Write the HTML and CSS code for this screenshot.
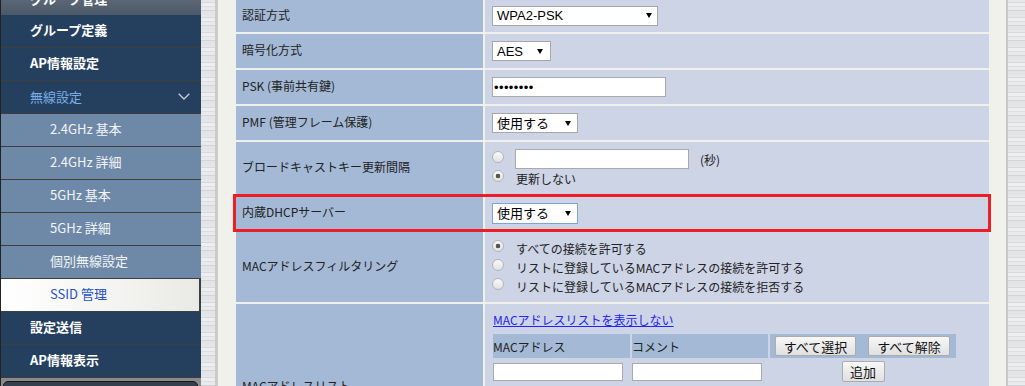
FILE: index.html
```html
<!DOCTYPE html>
<html lang="ja">
<head>
<meta charset="utf-8">
<title>SSID 管理</title>
<link rel="stylesheet" href="styles.css">
</head>
<body>
<div class="page">
  <aside class="sidebar">
    <div class="side-head">グループ管理</div>
    <nav class="nav">
      <a class="item top">グループ定義</a>
      <a class="item top">AP情報設定</a>
      <a class="item top open"><span>無線設定</span>
        <svg class="chev" width="12" height="7" viewBox="0 0 12 7"><polyline points="0.7,0.7 6,6 11.3,0.7" fill="none" stroke="#c6ccd4" stroke-width="1.3"/></svg>
      </a>
      <a class="item sub">2.4GHz 基本</a>
      <a class="item sub">2.4GHz 詳細</a>
      <a class="item sub">5GHz 基本</a>
      <a class="item sub">5GHz 詳細</a>
      <a class="item sub">個別無線設定</a>
      <a class="item sub current">SSID 管理</a>
      <a class="item top">設定送信</a>
      <a class="item top">AP情報表示</a>
      <div class="side-foot"><div class="foot-btn"></div></div>
    </nav>
  </aside>
  <div class="rail rail-l"></div>
  <main class="content">
    <div class="form">
      <div class="row r1">
        <div class="lbl">認証方式</div>
        <div class="val"><div class="sel w166"><span>WPA2-PSK</span><i class="arr a5"></i></div></div>
      </div>
      <div class="row">
        <div class="lbl">暗号化方式</div>
        <div class="val"><div class="sel w59"><span>AES</span><i class="arr a7"></i></div></div>
      </div>
      <div class="row">
        <div class="lbl">PSK (事前共有鍵)</div>
        <div class="val"><input class="txt psk" type="text" value="••••••••"></div>
      </div>
      <div class="row">
        <div class="lbl">PMF (管理フレーム保護)</div>
        <div class="val"><div class="sel w86"><span>使用する</span><i class="arr"></i></div></div>
      </div>
      <div class="row r5">
        <div class="lbl">ブロードキャストキー更新間隔</div>
        <div class="val col">
          <label class="opt l1"><input type="radio" name="bk"><input class="txt w174" type="text"><span class="unit">(秒)</span></label>
          <label class="opt l2"><input type="radio" name="bk" checked><span>更新しない</span></label>
        </div>
      </div>
      <div class="row hl">
        <div class="lbl">内蔵DHCPサーバー</div>
        <div class="val"><div class="sel w86 focus"><span>使用する</span><i class="arr"></i></div></div>
      </div>
      <div class="row r7">
        <div class="lbl">MACアドレスフィルタリング</div>
        <div class="val col">
          <label class="opt"><input type="radio" name="mf" checked><span>すべての接続を許可する</span></label>
          <label class="opt"><input type="radio" name="mf"><span>リストに登録しているMACアドレスの接続を許可する</span></label>
          <label class="opt"><input type="radio" name="mf"><span>リストに登録しているMACアドレスの接続を拒否する</span></label>
        </div>
      </div>
      <div class="row r8">
        <div class="lbl">MACアドレスリスト</div>
        <div class="val top8">
          <a class="link" href="#">MACアドレスリストを表示しない</a>
          <div class="mac">
            <div class="th">MACアドレス</div>
            <div class="th">コメント</div>
            <div class="th btns"><button class="btn b81">すべて選択</button><button class="btn b82">すべて解除</button></div>
            <div class="td"><input class="txt mtxt" type="text"></div>
            <div class="td"><input class="txt mtxt" type="text"></div>
            <div class="td center"><button class="btn add">追加</button></div>
          </div>
        </div>
      </div>
    </div>
  </main>
  <div class="rail rail-r"></div>
</div>
</body>
</html>
```
FILE: styles.css
```css
html, body {
  margin: 0;
  height: 386px;
  overflow: hidden;
}
body {
  background: #f1f1ec;
  font-family: "Noto Sans CJK JP", "Noto Sans", sans-serif;
  color: #222;
}
.page {
  display: flex;
  height: 386px;
}

/* ---------- sidebar ---------- */
.sidebar {
  flex: none;
  width: 200px;
  border-left: 1px solid #222;
  background: #3e3e3e;
  display: flex;
  flex-direction: column;
}
.side-head {
  flex: none;
  height: 34px;
  margin-top: -19px;
  display: flex;
  align-items: center;
  padding-left: 29px;
  background: linear-gradient(#6e7a89, #4b5868);
  color: #fff;
  font-size: 13px;
  font-weight: bold;
}
.nav {
  display: flex;
  flex-direction: column;
  gap: 1px;
}
.item {
  box-sizing: border-box;
  height: 32px;
  padding-bottom: 3px;
  display: flex;
  align-items: center;
  font-size: 13px;
  text-decoration: none;
  white-space: nowrap;
}
.item.top {
  background: #25405f;
  color: #fff;
  font-weight: bold;
  padding-left: 29px;
}
.item.open {
  color: #79afe6;
  font-weight: normal;
  justify-content: space-between;
  padding-right: 11px;
  padding-bottom: 1px;
}
.chev {
  display: block;
}
.item.sub {
  background: #6e89a7;
  color: #f2f4f7;
  padding-left: 49px;
}
.item.sub.current {
  background: linear-gradient(90deg, #ffffff, #f3f3f1 60%, #e9e9e6);
  color: #2650c6;
  margin-right: 2px;
}
.side-foot {
  height: 12px;
  background: #8a8a8a;
  padding: 3px 3px 0 2px;
}
.foot-btn {
  height: 30px;
  border: 1px solid #161616;
  border-radius: 5px;
  background: #34404e;
}

/* ---------- textured rails ---------- */
.rail {
  flex: none;
  background: repeating-linear-gradient(180deg,
    #e6e7e9 0px, #e6e7e9 2px,
    #d6d8db 2px, #d6d8db 3px,
    #eeeff0 3px, #eeeff0 6px,
    #dcdee1 6px, #dcdee1 7px,
    #e9eaec 7px, #e9eaec 10px,
    #d2d4d7 10px, #d2d4d7 11px,
    #e3e4e6 11px, #e3e4e6 15px);
}
.rail-l {
  width: 14px;
  border-right: 3px solid #cacaca;
}
.rail-r {
  width: 17px;
  border-left: 2px solid #c8c8c8;
}

/* ---------- content ---------- */
.content {
  flex: 1;
  padding: 0 17px 0 18px;
  overflow: hidden;
}
.form {
  display: flex;
  flex-direction: column;
  gap: 2px;
  margin-top: -1px;
}
.row {
  display: grid;
  grid-template-columns: 247px 504px;
  column-gap: 2px;
  height: 34px;
}
.row.r1 { height: 33px; }
.row.r5 { height: 52px; }
.row.r7 { height: 70px; }
.row.r8 { height: 166px; }
.row.hl { position: relative; }
.row.hl::after {
  content: "";
  position: absolute;
  top: -2px;
  bottom: -2px;
  left: -3px;
  right: -2px;
  border: 3px solid #ee1c25;
  pointer-events: none;
}
.lbl {
  box-sizing: border-box;
  background: #a4b9d5;
  display: flex;
  align-items: center;
  padding-left: 6px;
  padding-bottom: 3px;
  font-size: 12px;
  color: #222;
  white-space: nowrap;
}
.val {
  background: #cdd4e6;
  display: flex;
  align-items: center;
  padding-left: 7px;
  font-size: 12px;
  color: #222;
}
.val.col {
  flex-direction: column;
  align-items: flex-start;
  justify-content: center;
}
.val.top8 {
  flex-direction: column;
  align-items: flex-start;
  justify-content: flex-start;
  padding-top: 8px;
  padding-left: 8px;
}

/* select look-alike */
.sel {
  display: flex;
  align-items: center;
  box-sizing: border-box;
  height: 20px;
  border: 1px solid #a7a7a7;
  background: #fff;
  padding-left: 4px;
  font: 13px/1 "Liberation Sans", "Noto Sans CJK JP", sans-serif;
  color: #000;
}
.sel.focus {
  height: 21px;
  border-color: #7ea3d6;
}
.w166 { width: 166px; }
.w59 { width: 59px; }
.w86 { width: 86px; }
.arr {
  margin-left: auto;
  margin-right: 6px;
  width: 0;
  height: 0;
  border-left: 3px solid transparent;
  border-right: 3px solid transparent;
  border-top: 5px solid #000;
}
.arr.a5 { margin-right: 5px; }
.arr.a7 { margin-right: 7px; }

/* text inputs */
.txt {
  box-sizing: border-box;
  height: 20px;
  margin: 0;
  border: 1px solid #a9a9a9;
  background: #fff;
  padding: 0 1px;
  font: 13px "Liberation Sans", sans-serif;
  color: #000;
  outline: none;
}
.psk { width: 174px; letter-spacing: 0.4px; }
.w174 { width: 174px; }
.mtxt { width: 130px; height: 18px; }

/* radios */
.opt {
  display: flex;
  align-items: center;
  gap: 12px;
  height: 19px;
  white-space: nowrap;
}
.opt.l1 { height: 20px; gap: 11px; }
.opt.l2 { height: 18px; }
.opt input[type="radio"] {
  appearance: none;
  -webkit-appearance: none;
  margin: 0 0 4px 0;
  width: 12px;
  height: 12px;
  flex: none;
  box-sizing: border-box;
  border: 1px solid #b4b4b4;
  border-radius: 50%;
  background: linear-gradient(#f9f9f9, #e2e2e2);
}
.opt input[type="radio"]:checked {
  background: radial-gradient(circle, #555 0, #555 2px, transparent 2.6px), linear-gradient(#f9f9f9, #e2e2e2);
}

/* MAC list */
.link {
  font-size: 12px;
  line-height: 16px;
  color: #2424f0;
  text-decoration: underline;
}
.mac {
  margin-top: 6px;
  display: grid;
  grid-template-columns: 137px 136px 186px;
  grid-template-rows: 24px 21px;
  column-gap: 2px;
  row-gap: 3px;
}
.th {
  background: #a4b9d5;
  display: flex;
  align-items: center;
  font-size: 12px;
  color: #222;
}
.th.btns {
  padding-left: 5px;
  gap: 12px;
}
.td {
  display: flex;
  align-items: center;
}
.td.center { justify-content: center; }
.btn {
  box-sizing: border-box;
  height: 20px;
  margin: 0;
  padding: 0;
  border: 1px solid #acacac;
  border-radius: 2px;
  background: linear-gradient(#f7f7f7, #e0e0e0);
  font: 13px/1 "Noto Sans CJK JP", sans-serif;
  color: #111;
}
.b81 { width: 81px; }
.b82 { width: 82px; }
.add { width: 43px; height: 21px; }
```
